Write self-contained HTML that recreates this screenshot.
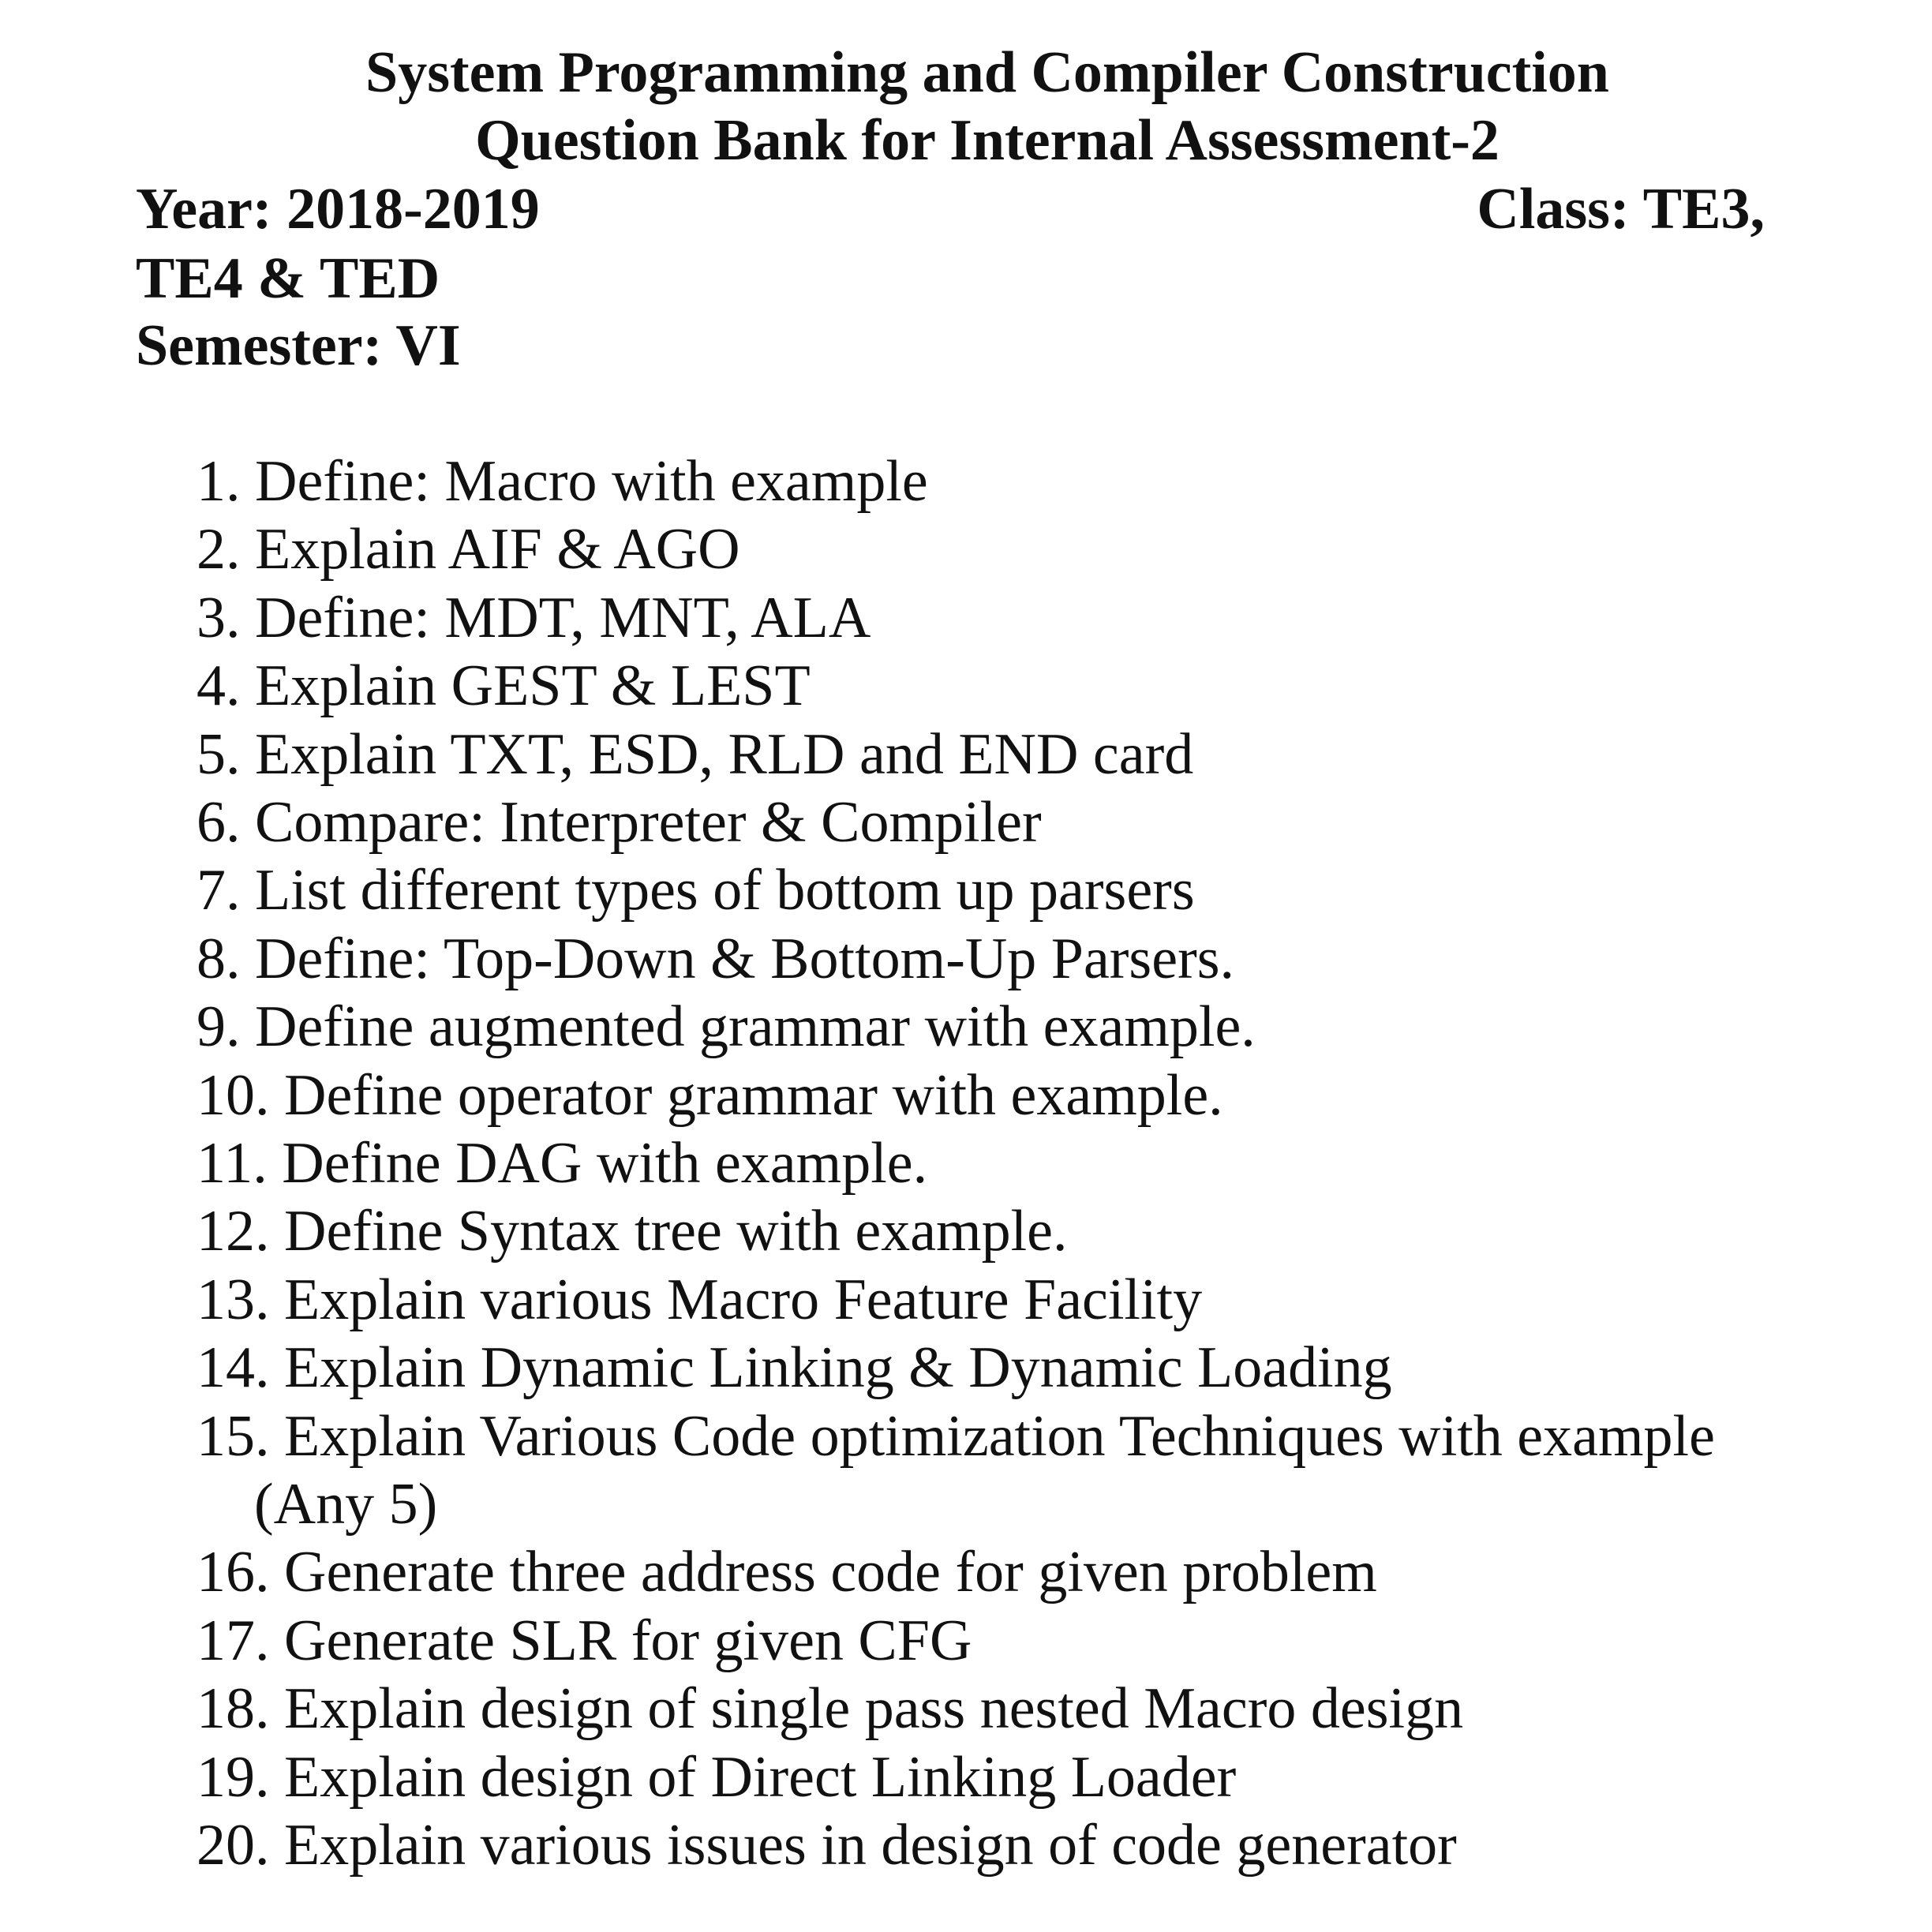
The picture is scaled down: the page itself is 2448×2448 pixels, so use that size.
<!DOCTYPE html>
<html><head><meta charset="utf-8"><style>
html,body{margin:0;padding:0;background:#fff;}
body{width:2448px;height:2448px;position:relative;overflow:hidden;font-family:"Liberation Serif",serif;color:#111;}
.l{position:absolute;white-space:nowrap;font-size:74px;line-height:72px;}
.b{font-weight:bold;}
</style></head><body>
<div class="l b" style="top:56px;left:0;width:2502px;text-align:center;">System Programming and Compiler Construction</div>
<div class="l b" style="top:142px;left:0;width:2502px;text-align:center;">Question Bank for Internal Assessment-2</div>
<div class="l b" style="top:229px;left:172px;">Year: 2018-2019</div>
<div class="l b" style="top:229px;right:212px;">Class: TE3,</div>
<div class="l b" style="top:317px;left:172px;">TE4 &amp; TED</div>
<div class="l b" style="top:402px;left:172px;">Semester: VI</div>

<div class="l" style="top:574px;left:249px;">1. Define: Macro with example</div>
<div class="l" style="top:660px;left:249px;">2. Explain AIF &amp; AGO</div>
<div class="l" style="top:747px;left:249px;">3. Define: MDT, MNT, ALA</div>
<div class="l" style="top:833px;left:249px;">4. Explain GEST &amp; LEST</div>
<div class="l" style="top:920px;left:249px;">5. Explain TXT, ESD, RLD and END card</div>
<div class="l" style="top:1006px;left:249px;">6. Compare: Interpreter &amp; Compiler</div>
<div class="l" style="top:1092px;left:249px;">7. List different types of bottom up parsers</div>
<div class="l" style="top:1179px;left:249px;">8. Define: Top-Down &amp; Bottom-Up Parsers.</div>
<div class="l" style="top:1265px;left:249px;">9. Define augmented grammar with example.</div>
<div class="l" style="top:1352px;left:249px;">10. Define operator grammar with example.</div>
<div class="l" style="top:1438px;left:249px;">11. Define DAG with example.</div>
<div class="l" style="top:1524px;left:249px;">12. Define Syntax tree with example.</div>
<div class="l" style="top:1611px;left:249px;">13. Explain various Macro Feature Facility</div>
<div class="l" style="top:1697px;left:249px;">14. Explain Dynamic Linking &amp; Dynamic Loading</div>
<div class="l" style="top:1784px;left:249px;">15. Explain Various Code optimization Techniques with example</div>
<div class="l" style="top:1870px;left:322px;">(Any 5)</div>
<div class="l" style="top:1956px;left:249px;">16. Generate three address code for given problem</div>
<div class="l" style="top:2043px;left:249px;">17. Generate SLR for given CFG</div>
<div class="l" style="top:2129px;left:249px;">18. Explain design of single pass nested Macro design</div>
<div class="l" style="top:2216px;left:249px;">19. Explain design of Direct Linking Loader</div>
<div class="l" style="top:2302px;left:249px;">20. Explain various issues in design of code generator</div>
</body></html>
